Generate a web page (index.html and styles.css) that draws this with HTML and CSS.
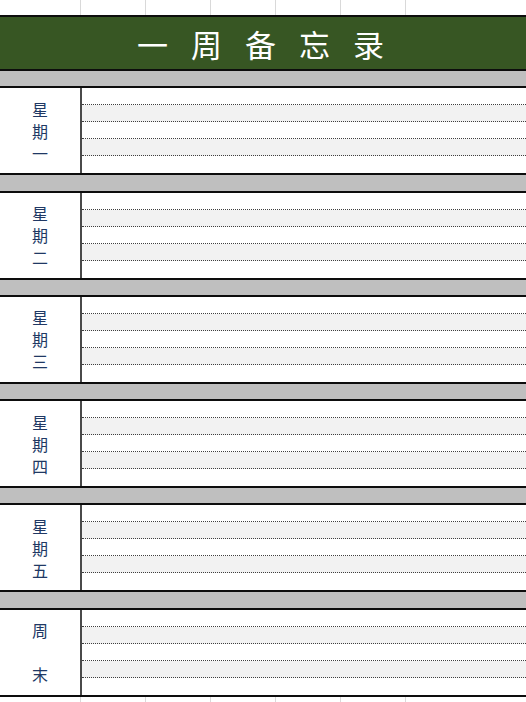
FILE: index.html
```html
<!DOCTYPE html>
<html lang="zh-CN">
<head>
<meta charset="utf-8">
<title>一周备忘录</title>
<link rel="stylesheet" href="styles.css">
</head>
<body>
<div class="sheet">
  <div class="gridrow top">
    <div class="gc first"></div><div class="gc"></div><div class="gc"></div><div class="gc"></div><div class="gc"></div><div class="gc"></div><div class="gc last"></div>
  </div>
  <div class="title">一周备忘录</div>

  <section class="day">
    <div class="band"></div>
    <div class="body">
      <div class="label">星<br>期<br>一</div>
      <div class="lines"><div class="ln"></div><div class="ln alt"></div><div class="ln"></div><div class="ln alt"></div><div class="ln end"></div></div>
    </div>
  </section>

  <section class="day">
    <div class="band"></div>
    <div class="body">
      <div class="label">星<br>期<br>二</div>
      <div class="lines"><div class="ln"></div><div class="ln alt"></div><div class="ln"></div><div class="ln alt"></div><div class="ln end"></div></div>
    </div>
  </section>

  <section class="day">
    <div class="band"></div>
    <div class="body">
      <div class="label">星<br>期<br>三</div>
      <div class="lines"><div class="ln"></div><div class="ln alt"></div><div class="ln"></div><div class="ln alt"></div><div class="ln end"></div></div>
    </div>
  </section>

  <section class="day">
    <div class="band"></div>
    <div class="body">
      <div class="label">星<br>期<br>四</div>
      <div class="lines"><div class="ln"></div><div class="ln alt"></div><div class="ln"></div><div class="ln alt"></div><div class="ln end"></div></div>
    </div>
  </section>

  <section class="day">
    <div class="band"></div>
    <div class="body">
      <div class="label">星<br>期<br>五</div>
      <div class="lines"><div class="ln"></div><div class="ln alt"></div><div class="ln"></div><div class="ln alt"></div><div class="ln end"></div></div>
    </div>
  </section>

  <section class="day last-day">
    <div class="band"></div>
    <div class="body">
      <div class="label">周<br><br>末</div>
      <div class="lines"><div class="ln"></div><div class="ln alt"></div><div class="ln"></div><div class="ln alt"></div><div class="ln end"></div></div>
    </div>
  </section>

  <div class="gridrow bottom">
    <div class="gc first"></div><div class="gc"></div><div class="gc"></div><div class="gc"></div><div class="gc"></div><div class="gc"></div><div class="gc last"></div>
  </div>
</div>
</body>
</html>
```

FILE: styles.css
```css
html, body {
  margin: 0;
  padding: 0;
  background: #ffffff;
}

body {
  width: 526px;
  height: 702px;
  overflow: hidden;
  font-family: "Noto Sans CJK SC", "Noto Sans", sans-serif;
}

.sheet {
  display: flex;
  flex-direction: column;
  width: 526px;
}

.gridrow {
  display: flex;
  background: #ffffff;
}

.gridrow.top {
  height: 15px;
}

.gridrow.bottom {
  height: 8px;
}

.gc {
  width: 64px;
  flex: none;
  border-right: 1px solid #d9d9d9;
}

.gc.first {
  width: 80px;
}

.gc.last {
  flex: 1;
  border-right: none;
}

.title {
  height: 52px;
  border-top: 2px solid #0d0d0d;
  background: #375623;
  color: #ffffff;
  font-size: 31px;
  letter-spacing: 23px;
  padding-left: 18px;
  display: flex;
  align-items: center;
  justify-content: center;
  line-height: 1;
}

.band {
  height: 15.3px;
  background: #bfbfbf;
  border-top: 2px solid #0d0d0d;
  border-bottom: 2px solid #0d0d0d;
}

.body {
  display: flex;
  height: 85px;
}

.last-day .body {
  border-bottom: 2px solid #0d0d0d;
}

.label {
  width: 80px;
  flex: none;
  border-right: 2px solid #4a4a4a;
  display: flex;
  align-items: center;
  justify-content: center;
  text-align: center;
  color: #203864;
  font-size: 16px;
  line-height: 22px;
}

.lines {
  flex: 1;
  display: flex;
  flex-direction: column;
}

.ln {
  height: 17px;
  box-sizing: border-box;
  border-bottom: 1px dotted #3f3f3f;
  background: #ffffff;
}

.ln.alt {
  background: #f2f2f2;
}

.ln.end {
  border-bottom: none;
}
```
